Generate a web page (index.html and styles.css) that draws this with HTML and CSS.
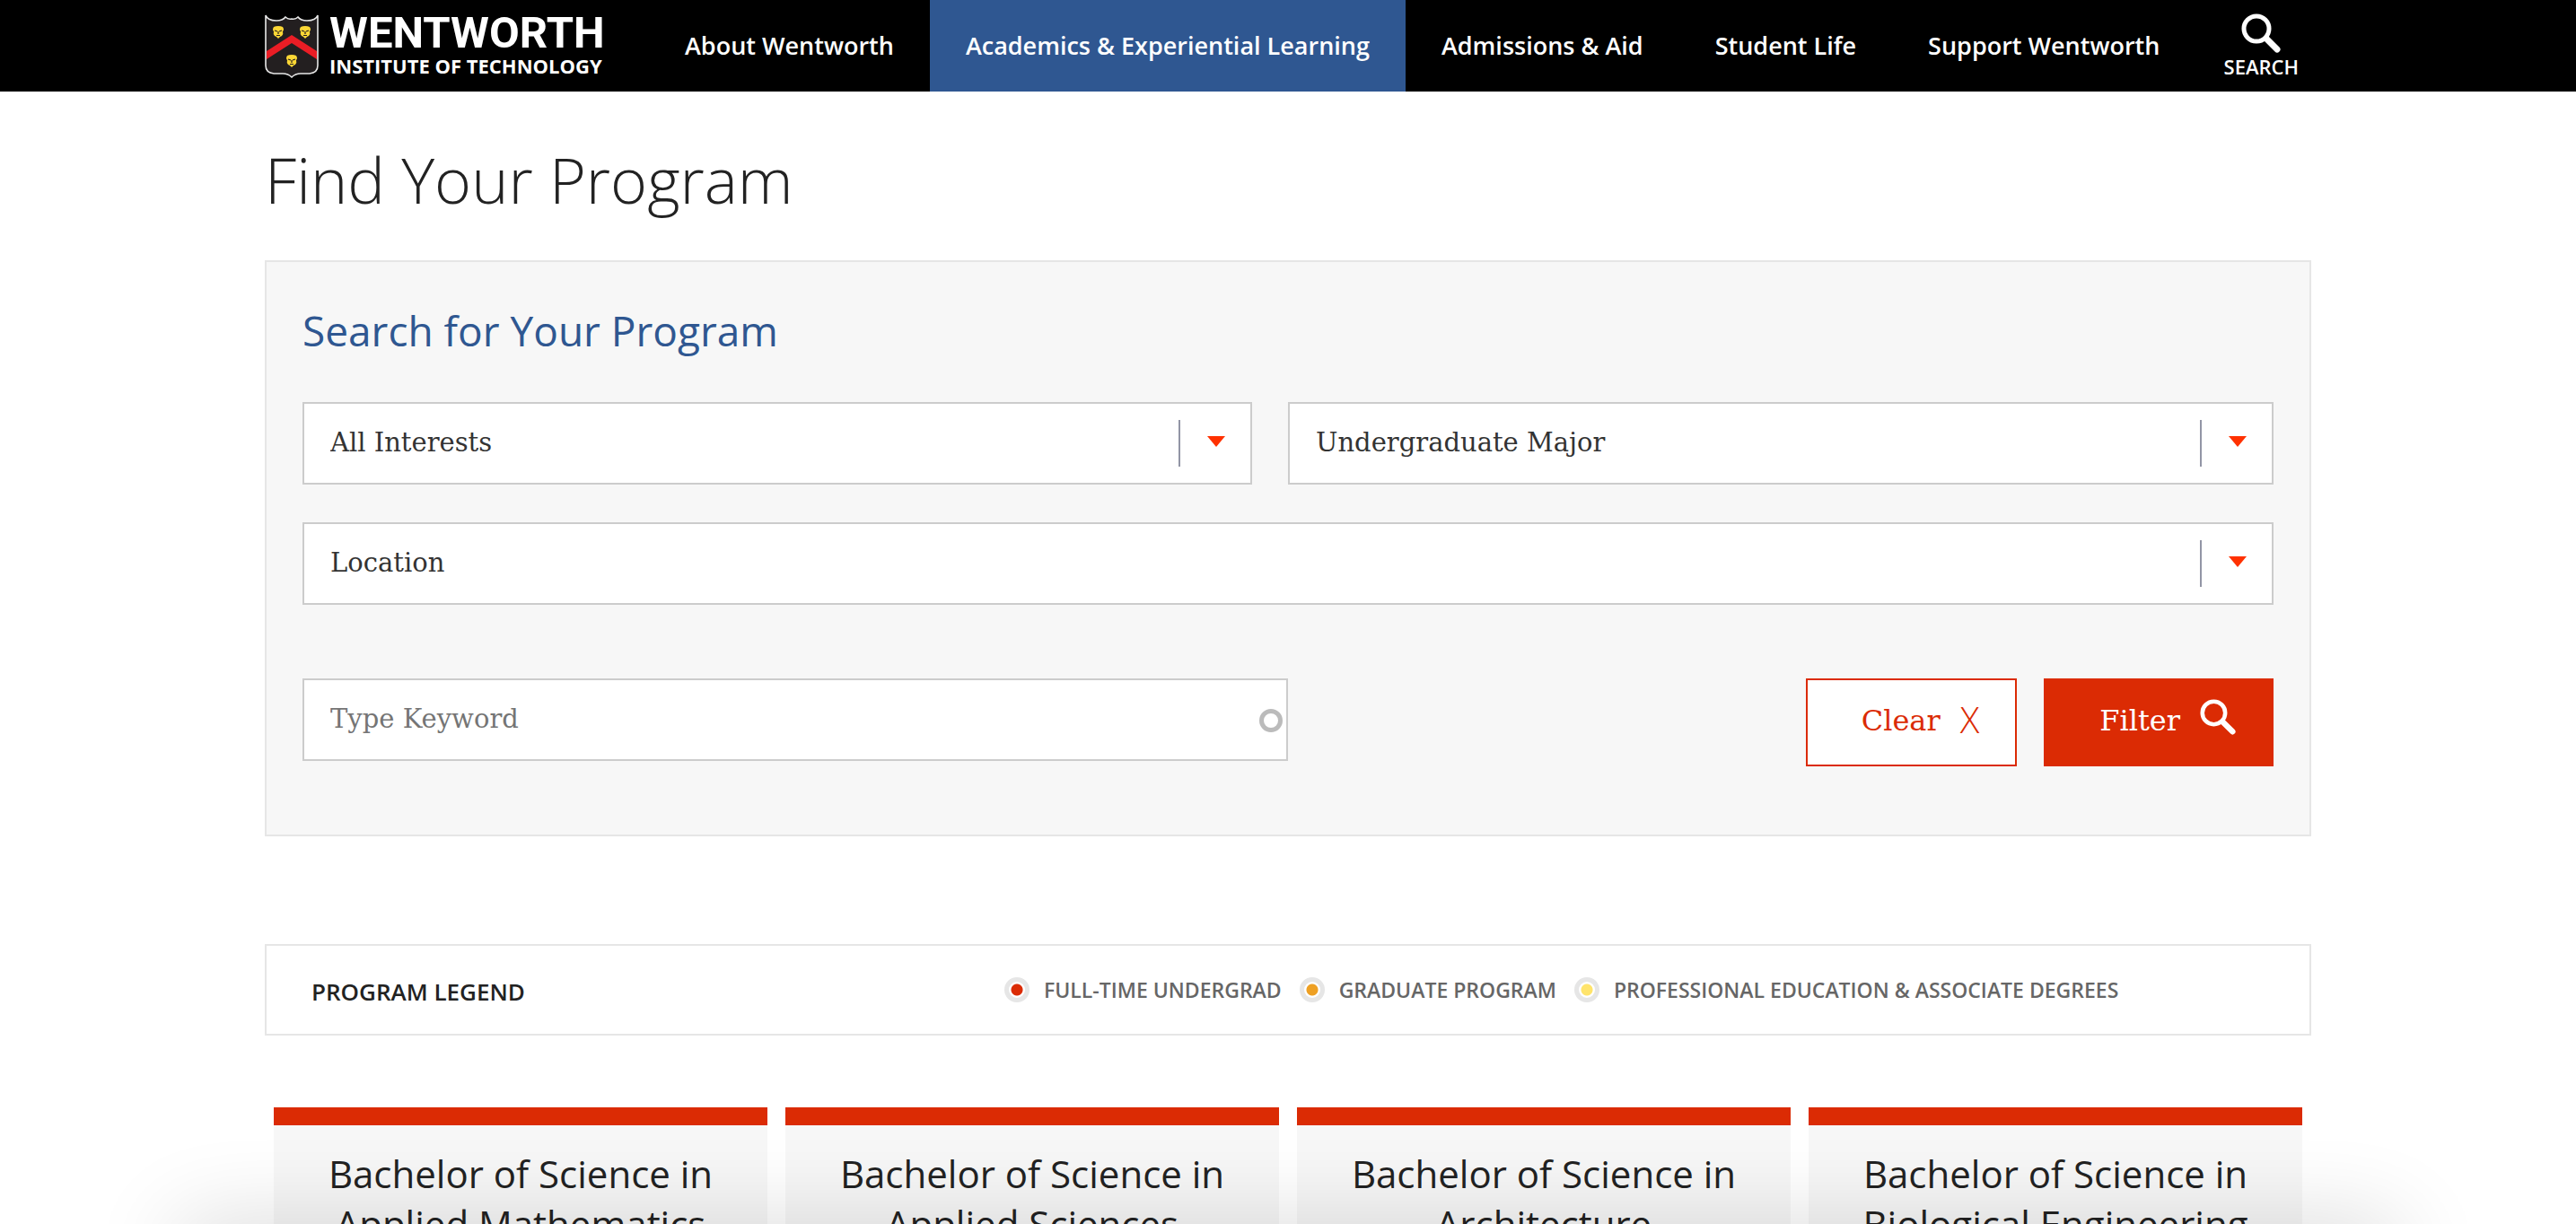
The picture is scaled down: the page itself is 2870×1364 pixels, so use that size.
FILE: index.html
```html
<!DOCTYPE html>
<html lang="en">
<head>
<meta charset="utf-8">
<title>Find Your Program | Wentworth Institute of Technology</title>
<meta name="viewport" content="width=device-width, initial-scale=1">
<link rel="stylesheet" href="styles.css">
</head>
<body>
<header class="site-header">
  <div class="container site-header__inner">
    <a class="brand" href="#">
      <svg class="brand__shield" viewBox="0 0 60 72" aria-hidden="true">
        <path d="M1 2Q3 8 13 8Q20 8 23 4Q26 7 30 6Q34 7 37 4Q40 8 47 8Q57 8 59 2V58Q59 66 50 67H40Q34 67 30 71Q26 67 20 67H10Q1 66 1 58Z" fill="#231f20" stroke="#e8e8e8" stroke-width="1.6"/>
        <path d="M2 42L30 24L58 42V51L30 33L2 51Z" fill="#ea1d25"/>
        <g fill="#fcd735">
          <path id="lion" d="M10 15Q12 14 15 14Q18 14 20 15Q22 18 20 20Q21 23 19 25L17 26L15 28L13 26L11 25Q9 23 10 20Q8 18 10 15Z"/>
          <use href="#lion" x="30"/>
          <use href="#lion" x="15" y="32"/>
        </g>
        <g stroke="#231f20" stroke-width="1.2" fill="none">
          <path id="face" d="M11 19L14 20M19 19L16 20M15 20V23M13 24.500H17"/>
          <use href="#face" x="30"/>
          <use href="#face" x="15" y="32"/>
        </g>
      </svg>
      <span class="brand__text">
        <span class="brand__name">WENTWORTH</span>
        <span class="brand__sub">INSTITUTE OF TECHNOLOGY</span>
      </span>
    </a>
    <nav class="main-nav" aria-label="Main">
      <a class="main-nav__link" href="#">About Wentworth</a>
      <a class="main-nav__link main-nav__link--active" href="#">Academics &amp; Experiential Learning</a>
      <a class="main-nav__link" href="#">Admissions &amp; Aid</a>
      <a class="main-nav__link" href="#">Student Life</a>
      <a class="main-nav__link" href="#">Support Wentworth</a>
    </nav>
    <button class="search-toggle" type="button">
      <svg class="search-toggle__icon" viewBox="0 0 44 44" aria-hidden="true"><circle cx="17" cy="17" r="14" fill="none" stroke="currentColor" stroke-width="5"/><path d="M28 28L40 40" stroke="currentColor" stroke-width="7" stroke-linecap="round"/></svg>
      <span>SEARCH</span>
    </button>
  </div>
</header>

<main class="container">
  <h1 class="page-title">Find Your Program</h1>

  <form class="finder">
    <h2 class="finder__title">Search for Your Program</h2>
    <div class="finder__selects">
      <div class="select">
        <select class="field" aria-label="Interests"><option>All Interests</option></select>
      </div>
      <div class="select">
        <select class="field" aria-label="Program type"><option>Undergraduate Major</option></select>
      </div>
      <div class="select select--wide">
        <select class="field" aria-label="Location"><option>Location</option></select>
      </div>
    </div>
    <div class="finder__actions">
      <div class="keyword">
        <input class="field" type="text" aria-label="Keyword" placeholder="Type Keyword">
        <span class="keyword__throbber"></span>
      </div>
      <div class="finder__buttons">
        <button class="btn btn--outline" type="reset">Clear <span class="btn__x">X</span></button>
        <button class="btn btn--solid" type="button">Filter
          <svg class="btn__icon" viewBox="0 0 44 44" aria-hidden="true"><circle cx="17" cy="17" r="14" fill="none" stroke="currentColor" stroke-width="5"/><path d="M28 28L40 40" stroke="currentColor" stroke-width="7" stroke-linecap="round"/></svg>
        </button>
      </div>
    </div>
  </form>

  <section class="legend">
    <h2 class="legend__title">PROGRAM LEGEND</h2>
    <ul class="legend__list">
      <li class="legend__item legend__item--undergrad">FULL-TIME UNDERGRAD</li>
      <li class="legend__item legend__item--graduate">GRADUATE PROGRAM</li>
      <li class="legend__item legend__item--professional">PROFESSIONAL EDUCATION &amp; ASSOCIATE DEGREES</li>
    </ul>
  </section>

  <section class="programs">
    <article class="program"><h3 class="program__title">Bachelor of Science in<br>Applied Mathematics</h3></article>
    <article class="program"><h3 class="program__title">Bachelor of Science in<br>Applied Sciences</h3></article>
    <article class="program"><h3 class="program__title">Bachelor of Science in<br>Architecture</h3></article>
    <article class="program"><h3 class="program__title">Bachelor of Science in<br>Biological Engineering</h3></article>
  </section>
</main>
<div class="bottom-shade"></div>
</body>
</html>
```
FILE: styles.css
```css
*,
*::before,
*::after {
  box-sizing: border-box;
}

body {
  margin: 0;
  background: #fff;
  color: #222;
  font-family: "Open Sans", sans-serif;
}

.container {
  max-width: 2280px;
  margin: 0 auto;
}

/* Header */
.site-header {
  background: #000;
  color: #fff;
}

.site-header__inner {
  display: flex;
  height: 102px;
}

.brand {
  display: flex;
  align-items: center;
  gap: 12px;
  width: 428px;
  color: inherit;
  text-decoration: none;
}

.brand__shield {
  width: 60px;
  height: 72px;
}

.brand__text {
  display: grid;
  font-weight: 700;
  white-space: nowrap;
}

.brand__name {
  font-family: Roboto, sans-serif;
  font-size: 49px;
  line-height: 44px;
}

.brand__sub {
  font-size: 22px;
  line-height: 28px;
}

.main-nav {
  display: flex;
}

.main-nav__link {
  display: flex;
  align-items: center;
  padding: 0 40px 2px;
  color: inherit;
  font-size: 27px;
  font-weight: 600;
  text-decoration: none;
  white-space: nowrap;
}

.main-nav__link--active {
  background: #2f5791;
}

.search-toggle {
  display: flex;
  flex-direction: column;
  align-items: center;
  gap: 4px;
  margin: 0 14px 0 auto;
  padding: 15px 0 0;
  border: 0;
  background: none;
  color: inherit;
  font: 600 22px/22px "Open Sans", sans-serif;
}

.search-toggle__icon {
  width: 44px;
  height: 44px;
}

/* Title */
.page-title {
  margin: 0;
  padding: 54px 0 46px;
  font-size: 70px;
  font-weight: 300;
  line-height: 88px;
}

/* Finder form */
.finder {
  padding: 46px 40px 76px;
  border: 2px solid #e6e6e6;
  background: #f7f7f7;
}

.finder__title {
  margin: 0 0 50px;
  color: #2f5791;
  font-size: 46px;
  font-weight: 400;
  line-height: 60px;
}

.finder__selects {
  display: grid;
  grid-template-columns: 1058fr 1098fr;
  gap: 42px 40px;
}

.select {
  position: relative;
}

.select--wide {
  grid-column: 1 / -1;
}

.select::before {
  content: "";
  position: absolute;
  top: 20px;
  right: 80px;
  width: 2px;
  height: 52px;
  background: #9295a5;
}

.select::after {
  content: "";
  position: absolute;
  top: 38px;
  right: 30px;
  width: 20px;
  height: 12px;
  background: #ff3100;
  clip-path: polygon(0 0, 100% 0, 50% 100%);
}

.field {
  display: block;
  width: 100%;
  height: 92px;
  margin: 0;
  padding: 0 29px 2px;
  border: 2px solid #ccc;
  border-radius: 0;
  background: #fff;
  color: #333;
  font-family: "DejaVu Serif", serif;
  font-size: 29px;
  appearance: none;
}

.field::placeholder {
  color: #757575;
  opacity: 1;
}

.finder__actions {
  display: flex;
  justify-content: space-between;
  align-items: flex-start;
  margin-top: 82px;
}

.keyword {
  position: relative;
  width: 50%;
}

.keyword__throbber {
  position: absolute;
  top: 34px;
  right: 6px;
  width: 26px;
  height: 26px;
  border: 5px solid #bbb;
  border-radius: 50%;
}

.finder__buttons {
  display: flex;
  gap: 30px;
}

.btn {
  display: flex;
  align-items: center;
  gap: 22px;
  height: 98px;
  padding: 0 40px 4px 60px;
  border: 2px solid #db2b04;
  border-radius: 0;
  font-family: "DejaVu Serif", serif;
  font-size: 32px;
}

.btn--outline {
  background: #fff;
  color: #db2b04;
}

.btn--solid {
  background: #db2b04;
  color: #fff;
}

.btn__x {
  margin-bottom: 4px;
  font-family: "Open Sans", sans-serif;
  font-size: 40px;
  font-weight: 300;
}

.btn__icon {
  width: 40px;
  height: 40px;
  margin-bottom: 8px;
}

/* Legend */
.legend {
  display: flex;
  align-items: center;
  height: 102px;
  margin-top: 120px;
  padding: 0 50px;
  border: 2px solid #e6e6e6;
}

.legend__title {
  width: 772px;
  margin: 0;
  padding-top: 4px;
  font-size: 26px;
  font-weight: 600;
}

.legend__list {
  display: flex;
  gap: 20px;
  margin: 0;
  padding: 0;
  color: #666;
  font-size: 23px;
  font-weight: 600;
  list-style: none;
  white-space: nowrap;
}

.legend__item {
  display: flex;
  align-items: center;
  gap: 16px;
}

.legend__item::before {
  content: "";
  width: 28px;
  height: 28px;
  border: 5px solid #e6e6e6;
  border-radius: 50%;
}

.legend__item--undergrad::before {
  background: radial-gradient(circle, #db2b04 6px, #fff 7px);
}

.legend__item--graduate::before {
  background: radial-gradient(circle, #eea023 6px, #fff 7px);
}

.legend__item--professional::before {
  background: radial-gradient(circle, #ffe46b 6px, #fff 7px);
}

/* Program cards */
.programs {
  display: grid;
  grid-template-columns: repeat(4, 1fr);
  gap: 20px;
  margin-top: 80px;
  padding: 0 10px;
}

.program {
  padding: 26px 20px 60px;
  border-top: 20px solid #db2b04;
  background: #f7f7f7;
}

.program__title {
  margin: 0;
  font-size: 42px;
  font-weight: 400;
  line-height: 56px;
  text-align: center;
}

/* Soft shade rising from the bottom edge of the window */
.bottom-shade {
  position: fixed;
  right: 200px;
  bottom: -80px;
  left: 200px;
  height: 80px;
  box-shadow: 0 0 100px rgba(0, 0, 0, 0.16);
}
```
